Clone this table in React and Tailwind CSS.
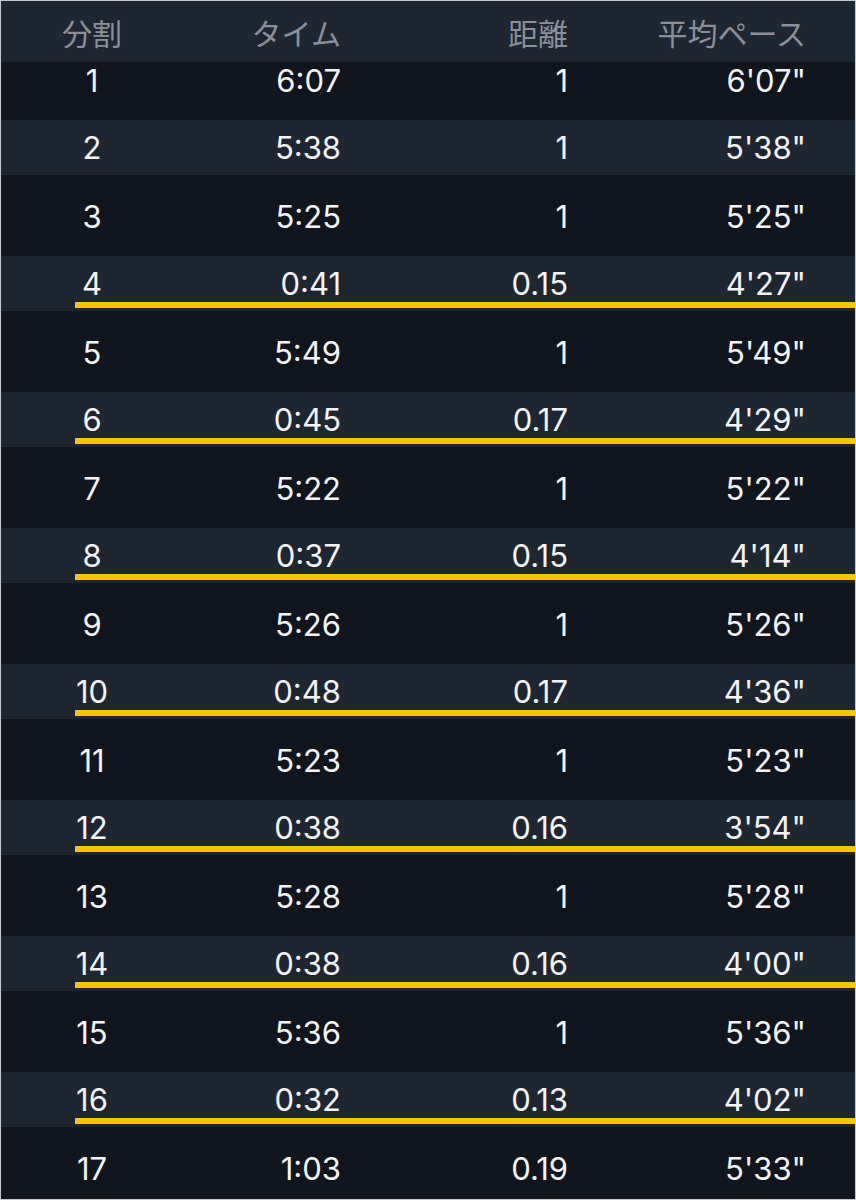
import React from 'react';

const splits = [
  { n: 1, time: '6:07', dist: '1', pace: "6'07\"" },
  { n: 2, time: '5:38', dist: '1', pace: "5'38\"" },
  { n: 3, time: '5:25', dist: '1', pace: "5'25\"" },
  { n: 4, time: '0:41', dist: '0.15', pace: "4'27\"" },
  { n: 5, time: '5:49', dist: '1', pace: "5'49\"" },
  { n: 6, time: '0:45', dist: '0.17', pace: "4'29\"" },
  { n: 7, time: '5:22', dist: '1', pace: "5'22\"" },
  { n: 8, time: '0:37', dist: '0.15', pace: "4'14\"" },
  { n: 9, time: '5:26', dist: '1', pace: "5'26\"" },
  { n: 10, time: '0:48', dist: '0.17', pace: "4'36\"" },
  { n: 11, time: '5:23', dist: '1', pace: "5'23\"" },
  { n: 12, time: '0:38', dist: '0.16', pace: "3'54\"" },
  { n: 13, time: '5:28', dist: '1', pace: "5'28\"" },
  { n: 14, time: '0:38', dist: '0.16', pace: "4'00\"" },
  { n: 15, time: '5:36', dist: '1', pace: "5'36\"" },
  { n: 16, time: '0:32', dist: '0.13', pace: "4'02\"" },
  { n: 17, time: '1:03', dist: '0.19', pace: "5'33\"" },
];

function Cells({ s }) {
  return (
    <>
      <div className="w-[182px] text-center">{s.n}</div>
      <div className="w-[158px] text-right">{s.time}</div>
      <div className="w-[227px] text-right">{s.dist}</div>
      <div className="w-[238px] text-right">{s.pace}</div>
    </>
  );
}

function SplitRow({ s, first }) {
  // even rows get the lighter band; partial splits get the yellow rule
  if (s.n % 2 === 0) {
    const partial = s.dist !== '1';
    return (
      <div className="h-[55px] flex flex-col bg-[#1e2632]">
        <div className="h-[41px] mt-[7px] flex items-center">
          <Cells s={s} />
        </div>
        {partial && <div className="-mt-[2px] ml-[74px] h-[6px] bg-[#ffc300]" />}
      </div>
    );
  }
  if (first) {
    return (
      <div className="h-[58px] flex items-start pt-[5px] bg-[#10151e]">
        <Cells s={s} />
      </div>
    );
  }
  return (
    <div className="h-[81px] flex items-center pt-[2px] bg-[#10151e]">
      <Cells s={s} />
    </div>
  );
}

export default function App() {
  return (
    <div className="w-[856px] h-[1200px] overflow-hidden border border-[#c5c8cc] bg-[#10151e]">
      <div
        className="h-[61px] flex items-center bg-[#1e2632] text-[#8a9099] text-[30px] leading-none"
        style={{ fontFamily: '"Noto Sans CJK JP", sans-serif' }}
      >
        <div className="w-[182px] text-center">分割</div>
        <div className="w-[158px] text-right">タイム</div>
        <div className="w-[227px] text-right">距離</div>
        <div className="w-[238px] text-right">平均ペース</div>
      </div>
      <div
        className="text-[#f4f4f4] text-[31px] leading-[28px]"
        style={{ fontFamily: 'Inter, "Liberation Sans", sans-serif' }}
      >
        {splits.map((s, i) => (
          <SplitRow key={s.n} s={s} first={i === 0} />
        ))}
      </div>
    </div>
  );
}
